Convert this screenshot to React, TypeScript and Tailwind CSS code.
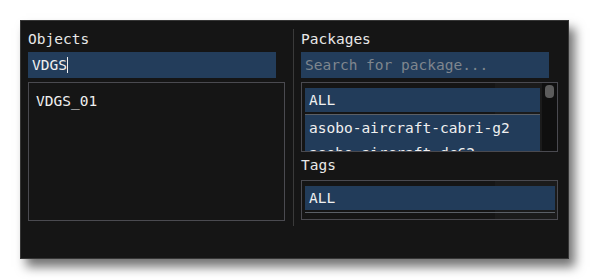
const mono = "font-['DejaVu_Sans_Mono','Liberation_Mono',monospace] text-[14.5px]";

function Label({ text, className = "" }: { text: string; className?: string }) {
  return <div className={`h-[22px] leading-[18px] text-[#e8e8e8] ${className}`}>{text}</div>;
}

function Row({ text, className = "h-[24px] leading-[24px]" }: { text: string; className?: string }) {
  return (
    <div className={`shrink-0 bg-[#223c5a] pl-[4px] whitespace-nowrap text-[#f0f0f0] ${className}`}>
      {text}
    </div>
  );
}

// grey line ImGui draws under the "ALL" entry
function Separator() {
  return <div className="mt-[2px] h-px shrink-0 bg-[#5a5f66]" />;
}

const boxBg = "bg-[linear-gradient(90deg,#151515_0,#151515_193px,#1b1b1b_193px)]";

export default function App() {
  return (
    <div className={`h-[280px] w-[590px] bg-white pl-[20px] pt-[20px] ${mono}`}>
      <div className="flex h-[239px] w-[549px] border border-[#363636] bg-[#151515] pl-[7px] pt-[9px] shadow-[6px_8px_10px_rgba(0,0,0,0.55)]">
        {/* Objects column */}
        <div className="flex w-[257px] flex-col">
          <Label text="Objects" />
          <div className="flex h-[26px] w-[248px] items-center bg-[#233d5b] pl-[4px] text-[#f0f0f0]">
            <span className="leading-[26px]">VDGS</span>
            <span className="h-[16px] w-px bg-[#f0f0f0]" />
          </div>
          <div className="mt-[4px] h-[139px] border border-[#4a4a50] pl-[7px] pt-[9px]">
            <div className="leading-[18px] text-[#f0f0f0]">VDGS_01</div>
          </div>
        </div>

        <div className="ml-[8px] mt-[-1px] h-[197px] w-px bg-[#3a3a3a]" />

        {/* Packages / Tags column */}
        <div className="ml-[7px] flex w-[257px] flex-col">
          <Label text="Packages" />
          <div className="h-[26px] w-[248px] bg-[#233d5b] pl-[4px] leading-[26px] text-[#7f868e]">
            Search for package...
          </div>
          <div className={`mt-[4px] flex h-[70px] border border-[#4a4a50] ${boxBg}`}>
            <div className="flex w-[238px] flex-col overflow-hidden pl-[3px] pt-[5px]">
              <Row text="ALL" />
              <Separator />
              <Row text="asobo-aircraft-cabri-g2" className="h-[25px] pt-[1px] leading-[24px]" />
              <Row text="asobo-aircraft-dc62" className="h-[25px] pt-[1px] leading-[24px]" />
            </div>
            <div className="ml-[2px] w-[15px] bg-[#0f0f0f] pl-[3px] pt-[2px]">
              <div className="h-[13px] w-[9px] rounded-[4px] bg-[#5c5c5c]" />
            </div>
          </div>
          <Label text="Tags" className="mt-[4px] h-[24px]" />
          <div className={`flex h-[40px] flex-col border border-[#4a4a50] pl-[3px] pr-[2px] pt-[5px] ${boxBg}`}>
            <Row text="ALL" />
            <Separator />
          </div>
        </div>
      </div>
    </div>
  );
}
